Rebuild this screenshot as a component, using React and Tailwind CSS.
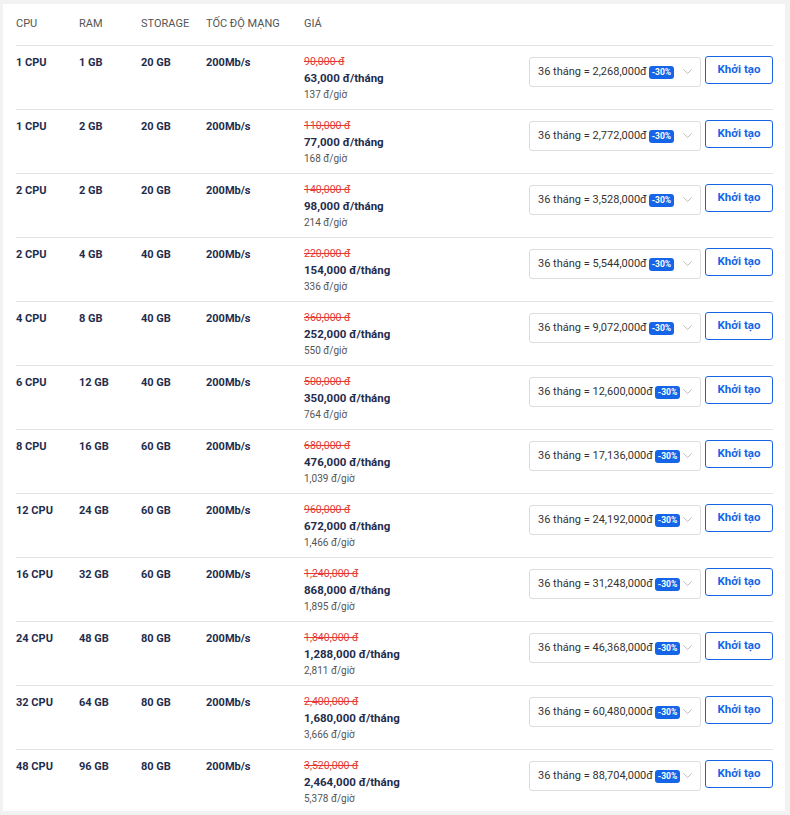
const rows = [
["1 CPU","1 GB","20 GB","90,000 đ","63,000 đ/tháng","137 đ/giờ","2,268,000đ"],
["1 CPU","2 GB","20 GB","110,000 đ","77,000 đ/tháng","168 đ/giờ","2,772,000đ"],
["2 CPU","2 GB","20 GB","140,000 đ","98,000 đ/tháng","214 đ/giờ","3,528,000đ"],
["2 CPU","4 GB","40 GB","220,000 đ","154,000 đ/tháng","336 đ/giờ","5,544,000đ"],
["4 CPU","8 GB","40 GB","360,000 đ","252,000 đ/tháng","550 đ/giờ","9,072,000đ"],
["6 CPU","12 GB","40 GB","500,000 đ","350,000 đ/tháng","764 đ/giờ","12,600,000đ"],
["8 CPU","16 GB","60 GB","680,000 đ","476,000 đ/tháng","1,039 đ/giờ","17,136,000đ"],
["12 CPU","24 GB","60 GB","960,000 đ","672,000 đ/tháng","1,466 đ/giờ","24,192,000đ"],
["16 CPU","32 GB","60 GB","1,240,000 đ","868,000 đ/tháng","1,895 đ/giờ","31,248,000đ"],
["24 CPU","48 GB","80 GB","1,840,000 đ","1,288,000 đ/tháng","2,811 đ/giờ","46,368,000đ"],
["32 CPU","64 GB","80 GB","2,400,000 đ","1,680,000 đ/tháng","3,666 đ/giờ","60,480,000đ"],
["48 CPU","96 GB","80 GB","3,520,000 đ","2,464,000 đ/tháng","5,378 đ/giờ","88,704,000đ"],
];
export default function App(){
  return (
    <div className="bg-[#f2f2f2] w-[790px] h-[815px] pt-[4px] pl-[3px]" style={{fontFamily:"Roboto, sans-serif"}}>
      <div className="bg-white w-[782px] h-[807px] pl-[13px] pr-[12px]">
        <div className="flex h-[42px] items-center text-[11px] text-[#555] border-b border-[#e3e3e3]">
          <div className="w-[63px]">CPU</div>
          <div className="w-[62px]">RAM</div>
          <div className="w-[65px]">STORAGE</div>
          <div className="w-[98px]">TỐC ĐỘ MẠNG</div>
          <div>GIÁ</div>
        </div>
        {rows.map((r,i)=>(
          <div key={i} className={"flex h-[64px] pt-[8px] text-[11px] text-[#1f2d4e] "+(i<rows.length-1?"border-b border-[#e3e3e3]":"")}>
            <div className="w-[63px] font-bold pt-[1px]">{r[0]}</div>
            <div className="w-[62px] font-bold pt-[1px]">{r[1]}</div>
            <div className="w-[65px] font-bold pt-[1px]">{r[2]}</div>
            <div className="w-[98px] font-bold pt-[1px]">200Mb/s</div>
            <div className="flex-1 flex flex-col leading-[15px]">
              <span className="text-[#e53935] line-through text-[10.5px]">{r[3]}</span>
              <span className="font-bold text-[11.5px] leading-[18px]">{r[4]}</span>
              <span className="text-[10px] text-[#555]">{r[5]}</span>
            </div>
            <div className="flex items-start gap-[4px] pt-[2px]">
              <div className="w-[172px] h-[30px] mt-[1px] border border-[#ddd] rounded-[3px] flex items-center pl-[8px] pr-[8px] text-[#333] text-[11px]">
                <span>36 tháng = {r[6]}</span>
                <span className="ml-[2px] bg-[#1565e6] text-white text-[8.5px] rounded-[3px] px-[3px] leading-[13px] font-bold">-30%</span>
                <svg className="ml-auto" width="9" height="6" viewBox="0 0 9 6"><path d="M0.5 0.5L4.5 4.5L8.5 0.5" fill="none" stroke="#bbb" strokeWidth="1"/></svg>
              </div>
              <button className="w-[68px] h-[28px] border border-[#1565e6] rounded-[3px] text-[#1565e6] font-bold text-[11.5px] bg-white">Khởi tạo</button>
            </div>
          </div>
        ))}
      </div>
    </div>
  );
}
